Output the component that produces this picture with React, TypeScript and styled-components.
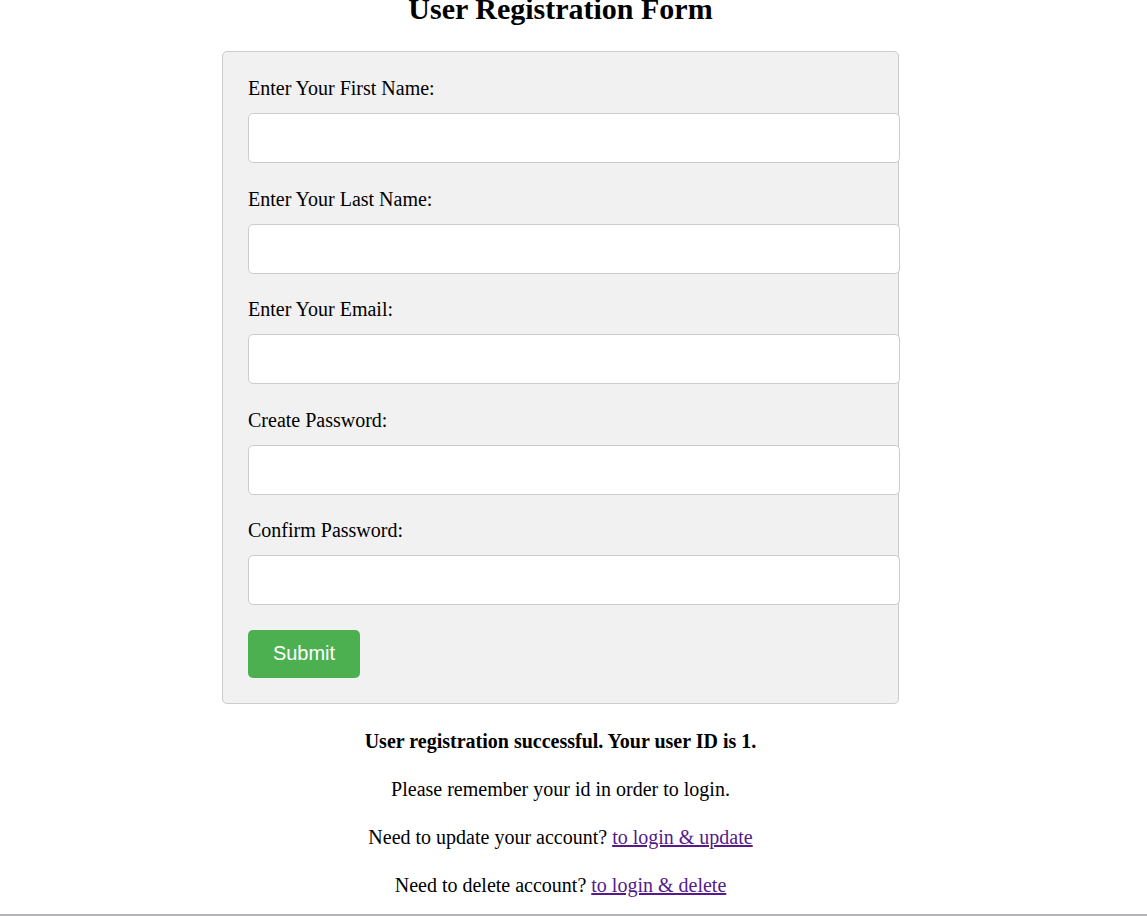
import React from "react";
import styled, { createGlobalStyle } from "styled-components";

const Global = createGlobalStyle`
  html, body { margin: 0; padding: 0; background: #fff; }
  body { font-family: "Liberation Serif", "Times New Roman", serif; color: #000; overflow: hidden; }
`;

const Page = styled.div`
  height: 916px;
  box-sizing: border-box;
  border-bottom: 2px solid #b4b4b6;
  overflow: hidden;
`;

const Column = styled.div`
  width: 1121px;
  display: flex;
  flex-direction: column;
  align-items: center;
  text-align: center;
`;

const Title = styled.h1`
  font-size: 30px;
  font-weight: bold;
  margin: -8px 0 25px;
  line-height: 34px;
`;

const Form = styled.form`
  width: 677px;
  box-sizing: border-box;
  background: #f1f1f1;
  border: 1px solid #cccccc;
  border-radius: 5px;
  padding: 25px;
  text-align: left;
  display: flex;
  flex-direction: column;
  align-items: flex-start;
`;

const Label = styled.label`
  font-size: 20px;
  line-height: 23px;
  margin-bottom: 13px;
`;

const Input = styled.input`
  display: block;
  width: 652px;
  height: 50px;
  box-sizing: border-box;
  flex-shrink: 0;
  padding: 12px;
  margin: 0 -27px 24.5px 0;
  border: 1px solid #cccccc;
  border-radius: 5px;
  background: #fff;
  font-size: 16px;
  outline: none;
`;

const Button = styled.button`
  width: 112px;
  height: 48px;
  border: none;
  border-radius: 5px;
  background: #4caf50;
  color: #fff;
  font-family: "Liberation Sans", Arial, sans-serif;
  font-size: 20px;
  padding: 0;
  cursor: pointer;
`;

const Message = styled.p<{ $bold?: boolean }>`
  font-size: 20px;
  line-height: 23px;
  margin: 0 0 25px;
  font-weight: ${(p) => (p.$bold ? "bold" : "normal")};
  &:first-of-type { margin-top: 26.5px; }
`;

const Link = styled.a`
  color: #551a8b;
  text-decoration: underline;
`;

const fields = [
  { id: "first", label: "Enter Your First Name:", type: "text" },
  { id: "last", label: "Enter Your Last Name:", type: "text" },
  { id: "email", label: "Enter Your Email:", type: "email" },
  { id: "pw", label: "Create Password:", type: "password" },
  { id: "pw2", label: "Confirm Password:", type: "password" },
];

export default function App() {
  return (
    <>
      <Global />
      <Page>
        <Column>
          <Title>User Registration Form</Title>
          <Form onSubmit={(e) => e.preventDefault()}>
            {fields.map((f) => (
              <React.Fragment key={f.id}>
                <Label htmlFor={f.id}>{f.label}</Label>
                <Input id={f.id} type={f.type} />
              </React.Fragment>
            ))}
            <Button type="submit">Submit</Button>
          </Form>
          <Message $bold>User registration successful. Your user ID is 1.</Message>
          <Message>Please remember your id in order to login.</Message>
          <Message>
            Need to update your account? <Link href="#">to login &amp; update</Link>
          </Message>
          <Message>
            Need to delete account? <Link href="#">to login &amp; delete</Link>
          </Message>
        </Column>
      </Page>
    </>
  );
}
